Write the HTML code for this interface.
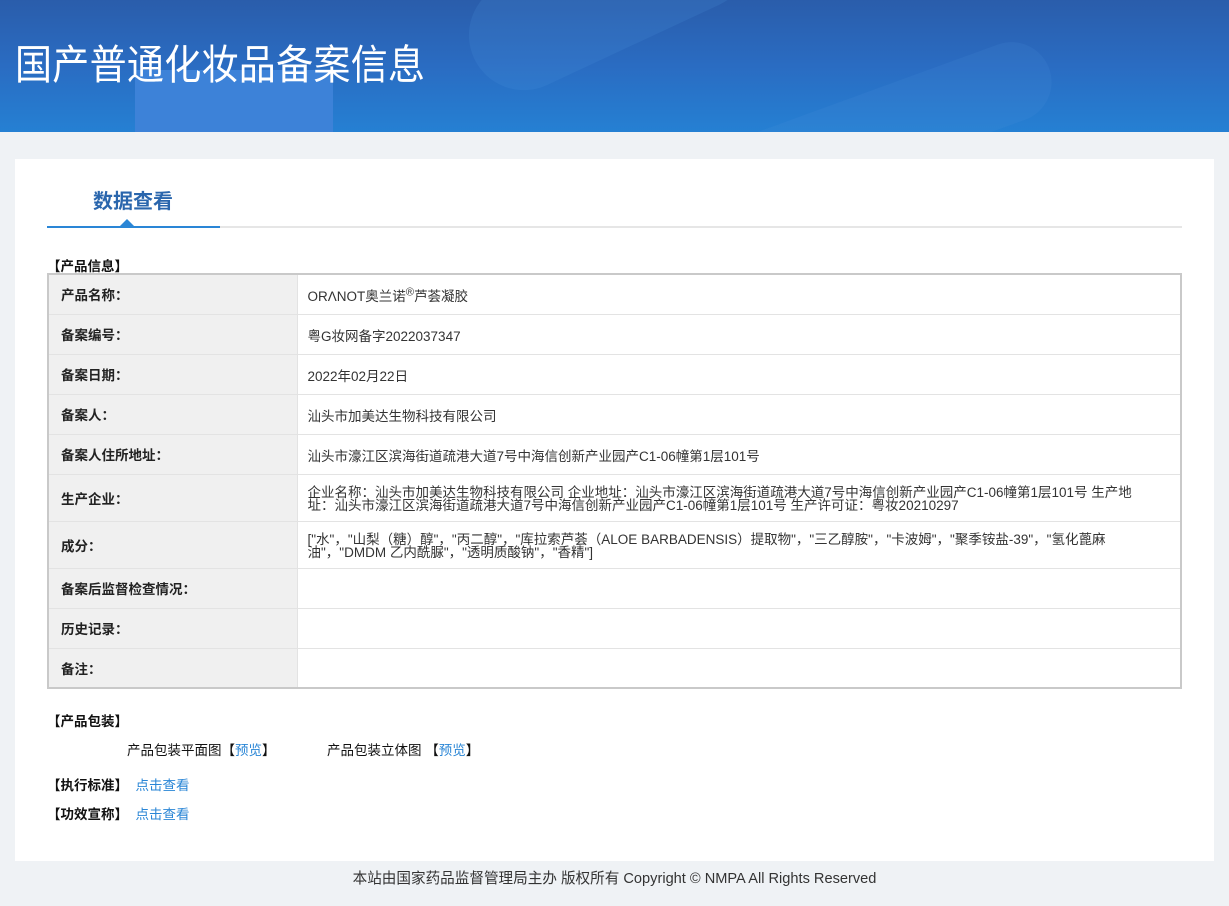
<!DOCTYPE html>
<html><head><meta charset="utf-8"><style>
*{margin:0;padding:0;box-sizing:border-box}
body{width:1229px;height:906px;background:#eff2f5;font-family:"Liberation Sans","Noto Sans CJK SC",sans-serif;font-size:13.5px;color:#333;position:relative;overflow:hidden}
.hd{position:absolute;left:0;top:0;width:1229px;height:132px;background:linear-gradient(180deg,#2a5dab 0%,#2a6cc2 50%,#2580d3 100%);overflow:hidden}
.hd .b1{position:absolute;left:135px;top:70px;width:198px;height:70px;background:#3d82d8}
.hd .b2{position:absolute;left:460px;top:-60px;width:300px;height:110px;border-radius:55px;background:rgba(80,150,220,.18);transform:rotate(-25deg)}
.hd .b3{position:absolute;left:700px;top:90px;width:360px;height:80px;border-radius:40px;background:rgba(80,150,220,.15);transform:rotate(-20deg)}
.hd h1{position:absolute;left:15px;top:36px;font-size:37px;font-weight:normal;color:#fff;line-height:46px;font-family:"Noto Sans CJK SC",sans-serif;transform:scaleY(1.1);transform-origin:left top;letter-spacing:0.3px}
.card{position:absolute;left:15px;top:159px;width:1199px;height:702px;background:#fff}
.tab{position:absolute;left:78px;top:26px;font-size:20px;font-weight:bold;color:#2a66ad}
.line{position:absolute;left:32px;top:67px;width:1135px;height:2px;background:#e6e6e6}
.line2{position:absolute;left:32px;top:67px;width:173px;height:2px;background:#2a86d6}
.tri{position:absolute;left:105px;top:60px;width:0;height:0;border-left:7px solid transparent;border-right:7px solid transparent;border-bottom:7px solid #2a86d6}
.sec{position:absolute;font-weight:bold;color:#111}
table{position:absolute;left:32px;top:114px;width:1135px;border-collapse:collapse;border:2px solid #c9c9c9}
td{border-bottom:1px solid #e3e3e3;height:40px;vertical-align:middle;font-size:13.5px}
td.l{width:249px;background:#f0f0f0;font-weight:bold;padding-left:12px;color:#222;border-right:1px solid #e3e3e3}
td.v{padding-left:10px;color:#333;padding-top:1px}
td.m{line-height:13px;padding-top:2px}
.blue{color:#2a86d6}
.ft{position:absolute;top:867px;left:0;width:1229px;text-align:center;font-size:14.6px;color:#333}
</style></head><body>
<div class="hd"><div class="b1"></div><div class="b2"></div><div class="b3"></div><h1>国产普通化妆品备案信息</h1></div>
<div class="card">
<div class="tab">数据查看</div>
<div class="line"></div><div class="line2"></div><div class="tri"></div>
<div class="sec" style="left:32px;top:96px">【产品信息】</div>
<table>
<tr><td class="l">产品名称：</td><td class="v">ORΛNOT奥兰诺<sup>®</sup>芦荟凝胶</td></tr>
<tr><td class="l">备案编号：</td><td class="v">粤G妆网备字2022037347</td></tr>
<tr><td class="l">备案日期：</td><td class="v">2022年02月22日</td></tr>
<tr><td class="l">备案人：</td><td class="v">汕头市加美达生物科技有限公司</td></tr>
<tr><td class="l">备案人住所地址：</td><td class="v">汕头市濠江区滨海街道疏港大道7号中海信创新产业园产C1-06幢第1层101号</td></tr>
<tr><td class="l" style="height:47px">生产企业：</td><td class="v m">企业名称：汕头市加美达生物科技有限公司 企业地址：汕头市濠江区滨海街道疏港大道7号中海信创新产业园产C1-06幢第1层101号 生产地<br>址：汕头市濠江区滨海街道疏港大道7号中海信创新产业园产C1-06幢第1层101号 生产许可证：粤妆20210297</td></tr>
<tr><td class="l" style="height:47px">成分：</td><td class="v m">["水"，"山梨（糖）醇"，"丙二醇"，"库拉索芦荟（ALOE BARBADENSIS）提取物"，"三乙醇胺"，"卡波姆"，"聚季铵盐-39"，"氢化蓖麻<br>油"，"DMDM 乙内酰脲"，"透明质酸钠"，"香精"]</td></tr>
<tr><td class="l">备案后监督检查情况：</td><td class="v"></td></tr>
<tr><td class="l">历史记录：</td><td class="v"></td></tr>
<tr><td class="l" style="border-bottom:none">备注：</td><td class="v" style="border-bottom:none"></td></tr>
</table>
<div class="sec" style="left:32px;top:551px">【产品包装】</div>
<div style="position:absolute;left:112px;top:580px;color:#111">产品包装平面图【<span class="blue">预览</span>】</div>
<div style="position:absolute;left:312px;top:580px;color:#111">产品包装立体图 【<span class="blue">预览</span>】</div>
<div style="position:absolute;left:32px;top:615px"><b style="color:#111">【执行标准】</b>&nbsp; <span class="blue">点击查看</span></div>
<div style="position:absolute;left:32px;top:644px"><b style="color:#111">【功效宣称】</b>&nbsp; <span class="blue">点击查看</span></div>
</div>
<div class="ft">本站由国家药品监督管理局主办 版权所有 Copyright © NMPA All Rights Reserved</div>
</body></html>
